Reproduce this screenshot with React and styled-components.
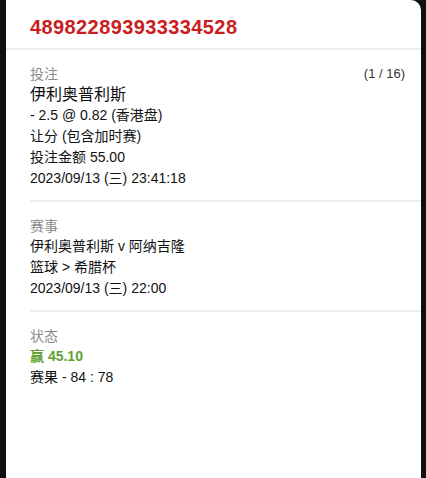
import React from 'react'
import styled, { createGlobalStyle } from 'styled-components'

const GlobalStyle = createGlobalStyle`
  html, body {
    margin: 0;
    padding: 0;
    background: #0f0f0f;
  }
  body {
    font-family: "Liberation Sans", Arial, "Noto Sans CJK SC", sans-serif;
  }
`

const Panel = styled.div`
  margin-left: 6px;
  width: 415px;
  height: 478px;
  background: #fff;
  border-top-right-radius: 10px;
  overflow: hidden;
`

const Header = styled.div`
  height: 50px;
  box-sizing: border-box;
  padding: 15px 24px 0;
  border-bottom: 2px solid #eeeeee;
`

const BetId = styled.div`
  font-size: 20px;
  font-weight: bold;
  color: #c9201f;
  letter-spacing: 0.4px;
  line-height: 24px;
`

const Section = styled.div`
  margin-left: 24px;
  padding: 12px 16px 11px 0;
  border-bottom: ${(p) => (p.$last ? 'none' : '2px solid #eeeeee')};
`

const LabelRow = styled.div`
  display: flex;
  justify-content: space-between;
  align-items: center;
  height: 22px;
`

const Label = styled.span`
  font-size: 14px;
  color: #8a8a8a;
`

const Counter = styled.span`
  font-size: 13px;
  color: #333;
`

const Name = styled.div`
  font-size: 16px;
  line-height: 21px;
  color: #0d0d0d;
`

const Line = styled.div`
  font-size: 14px;
  line-height: 21px;
  color: ${(p) => (p.$win ? '#63a232' : '#111')};
  font-weight: ${(p) => (p.$win ? 'bold' : 'normal')};
`

const App = () => {
  return (
    <>
      <GlobalStyle />
      <Panel>
        <Header>
          <BetId>489822893933334528</BetId>
        </Header>
        <Section>
          <LabelRow>
            <Label>投注</Label>
            <Counter>(1 / 16)</Counter>
          </LabelRow>
          <Name>伊利奥普利斯</Name>
          <Line>- 2.5 @ 0.82 (香港盘)</Line>
          <Line>让分 (包含加时赛)</Line>
          <Line>投注金额 55.00</Line>
          <Line>2023/09/13 (三) 23:41:18</Line>
        </Section>
        <Section>
          <LabelRow>
            <Label>赛事</Label>
          </LabelRow>
          <Line>伊利奥普利斯 v 阿纳吉隆</Line>
          <Line>篮球 &gt; 希腊杯</Line>
          <Line>2023/09/13 (三) 22:00</Line>
        </Section>
        <Section $last>
          <LabelRow>
            <Label>状态</Label>
          </LabelRow>
          <Line $win>赢 45.10</Line>
          <Line>赛果 - 84 : 78</Line>
        </Section>
      </Panel>
    </>
  )
}

export default App
